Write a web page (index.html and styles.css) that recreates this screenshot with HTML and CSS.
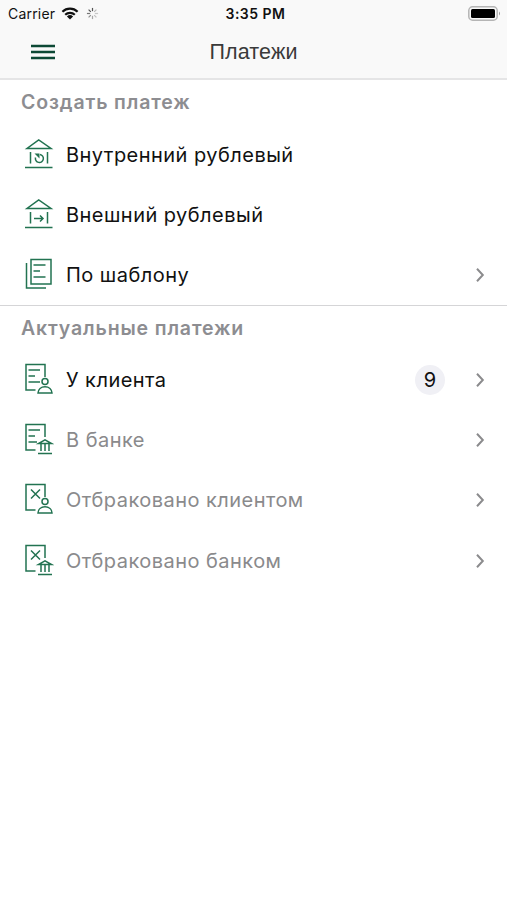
FILE: index.html
```html
<!DOCTYPE html>
<html lang="ru">
<head>
<meta charset="utf-8">
<title>Платежи</title>
<link rel="stylesheet" href="styles.css">
</head>
<body>
<svg class="defs" aria-hidden="true">
  <symbol id="house" viewBox="0 0 30 32"><path d="M3 10.500h24L14.700 2zM6.500 14v11.500M23.500 14v11.500M1 29.500h27.500"/></symbol>
  <symbol id="doc" viewBox="0 0 30 32"><path d="M11.500 27H2V1.500h19v12.500"/></symbol>
  <symbol id="person" viewBox="0 0 30 32"><circle cx="21" cy="18.500" r="3"/><path d="M14 30c.2-3.700 3-6.300 7-6.300s6.800 2.600 7 6.300z"/></symbol>
  <symbol id="bank" viewBox="0 0 30 32"><path d="M14.500 20.500h13L21 16.800zM17 21v7M21 21v7M25 21v7M14 30.500h14"/></symbol>
  <symbol id="chevron" viewBox="0 0 10 16"><path d="M2 1.800 7.800 8 2 14.200"/></symbol>
</svg>
<header class="top">
  <div class="status">
    <div class="carrier">
      <span>Carrier</span>
      <svg class="wifi" viewBox="0 0 18 13"><path d="M1.400 4.700a11 11 0 0 1 15.200 0M4.200 7.700a7 7 0 0 1 9.600 0"/><path class="solid" d="M5.900 9.400a4.500 4.500 0 0 1 6.200 0L9 12.600z"/></svg>
      <svg class="spinner" viewBox="0 0 14 14"><path d="M7 1v3.500"/><path opacity=".4" d="m11.200 2.800-2.400 2.400"/><path opacity=".3" d="M13 7H9.500"/><path opacity=".35" d="m11.200 11.200-2.400-2.400"/><path opacity=".5" d="M7 13V9.500"/><path opacity=".65" d="m2.800 11.200 2.400-2.400"/><path opacity=".8" d="M1 7h3.500"/><path d="m2.800 2.800 2.400 2.400"/></svg>
    </div>
    <div class="time">3:35 PM</div>
    <svg class="battery" viewBox="0 0 34 15"><rect class="case" x=".8" y=".8" width="28.400" height="13.400" rx="3.800"/><rect x="3" y="3" width="24" height="9" rx="1.500"/><path class="tip" d="M31 5.500q2 2 0 4z"/></svg>
  </div>
  <nav class="nav">
    <svg class="menu" viewBox="0 0 24 16"><path d="M0 2h24M0 8h24M0 14h24"/></svg>
    <h1 class="title">Платежи</h1>
  </nav>
</header>
<main>
  <section class="group">
    <h2 class="heading">Создать платеж</h2>
    <ul class="list">
      <li class="row"><svg class="icon" viewBox="0 0 30 32"><use href="#house"/><path d="M11.500 19.500a4 4 0 1 0 4.500-3"/><path class="solid" d="M10.500 15.500h5v5z"/></svg><span class="label">Внутренний рублевый</span></li>
      <li class="row"><svg class="icon" viewBox="0 0 30 32"><use href="#house"/><path d="M10 20.500h9M16 17.500l3 3-3 3"/></svg><span class="label">Внешний рублевый</span></li>
      <li class="row"><svg class="icon" viewBox="0 0 30 32"><path d="M7 1.500h20v24.500H7zM2.500 5v25H22M9.500 7h12M9.500 13h6.500M9.500 19h12"/></svg><span class="label">По шаблону</span><svg class="chevron"><use href="#chevron"/></svg></li>
    </ul>
  </section>
  <section class="group">
    <h2 class="heading">Актуальные платежи</h2>
    <ul class="list">
      <li class="row"><svg class="icon" viewBox="0 0 30 32"><use href="#doc"/><path d="M4.500 7H16M4.500 13H11M4.500 19H16"/><use href="#person"/></svg><span class="label">У клиента</span><span class="badge">9</span><svg class="chevron"><use href="#chevron"/></svg></li>
      <li class="row muted"><svg class="icon" viewBox="0 0 30 32"><use href="#doc"/><path d="M4.500 7H16M4.500 13H11M4.500 19H13"/><use href="#bank"/></svg><span class="label">В банке</span><svg class="chevron"><use href="#chevron"/></svg></li>
      <li class="row muted"><svg class="icon" viewBox="0 0 30 32"><use href="#doc"/><path d="m7 6.500 9 9M16 6.500l-9 9"/><use href="#person"/></svg><span class="label">Отбраковано клиентом</span><svg class="chevron"><use href="#chevron"/></svg></li>
      <li class="row muted"><svg class="icon" viewBox="0 0 30 32"><use href="#doc"/><path d="m7 6.500 9 9M16 6.500l-9 9"/><use href="#bank"/></svg><span class="label">Отбраковано банком</span><svg class="chevron"><use href="#chevron"/></svg></li>
    </ul>
  </section>
</main>
</body>
</html>
```

FILE: styles.css
```css
* { box-sizing: border-box; }
body { margin: 0; background: #fff; color: #111; font-family: Inter, "Liberation Sans", sans-serif; }
svg { fill: none; display: block; flex: none; }
.defs { position: absolute; width: 0; height: 0; }
.top { height: 80px; background: #f9f9f9; border-bottom: 2px solid #e5e5e6; }
.status { display: grid; grid-template-columns: 1fr auto 1fr; align-items: center; height: 27px; padding: 0 5px 0 8px; font-size: 14px; }
.carrier { display: flex; align-items: center; letter-spacing: .2px; }
.wifi { width: 18px; height: 13px; margin-left: 6px; stroke: #111; stroke-width: 2.200; }
.wifi .solid { fill: #111; stroke: none; }
.spinner { width: 13px; height: 13px; margin-left: 7px; stroke: #555; stroke-width: 1.300; }
.time { margin-left: 1px; font-weight: 600; letter-spacing: .5px; }
.battery { width: 34px; height: 15px; justify-self: end; fill: #000; }
.battery .case { fill: none; stroke: #b5b5b5; stroke-width: 1.500; }
.battery .tip { fill: #999; }
.nav { display: grid; grid-template-columns: 1fr auto 1fr; align-items: center; height: 50px; padding: 0 31px; }
.menu { width: 24px; height: 16px; margin-bottom: 1px; stroke: #0d4935; stroke-width: 2.400; }
.title { margin: 0; font: 400 21.500px/26px "Liberation Sans", sans-serif; letter-spacing: .15px; color: #3a3a3a; }
.group + .group { border-top: 1px solid #d5d5d7; }
.heading { margin: 0; height: 44.600px; padding: 0 21px; font-size: 19.500px; line-height: 45px; font-weight: 600; letter-spacing: .86px; color: #8d8d91; }
.group + .group .heading { height: 44.600px; }
.list { list-style: none; margin: 0; padding: 0; }
.row { display: flex; align-items: center; height: 60px; padding: 0 22px 0 24px; font-size: 20px; }
.group + .group .row { height: 60.100px; }
.muted { color: #8a8a8c; }
.icon { width: 30px; height: 32px; margin-bottom: 2px; stroke: #227351; stroke-width: 1.500; }
.icon .solid { fill: #227351; stroke: none; }
.label { margin-left: 12px; margin-right: auto; white-space: nowrap; letter-spacing: .46px; }
.chevron { width: 10px; height: 16px; stroke: #8b8b8d; stroke-width: 2; }
.badge { width: 30px; height: 30px; margin-right: 30px; border-radius: 50%; background: #f0f0f5; text-align: center; line-height: 30px; }
```
